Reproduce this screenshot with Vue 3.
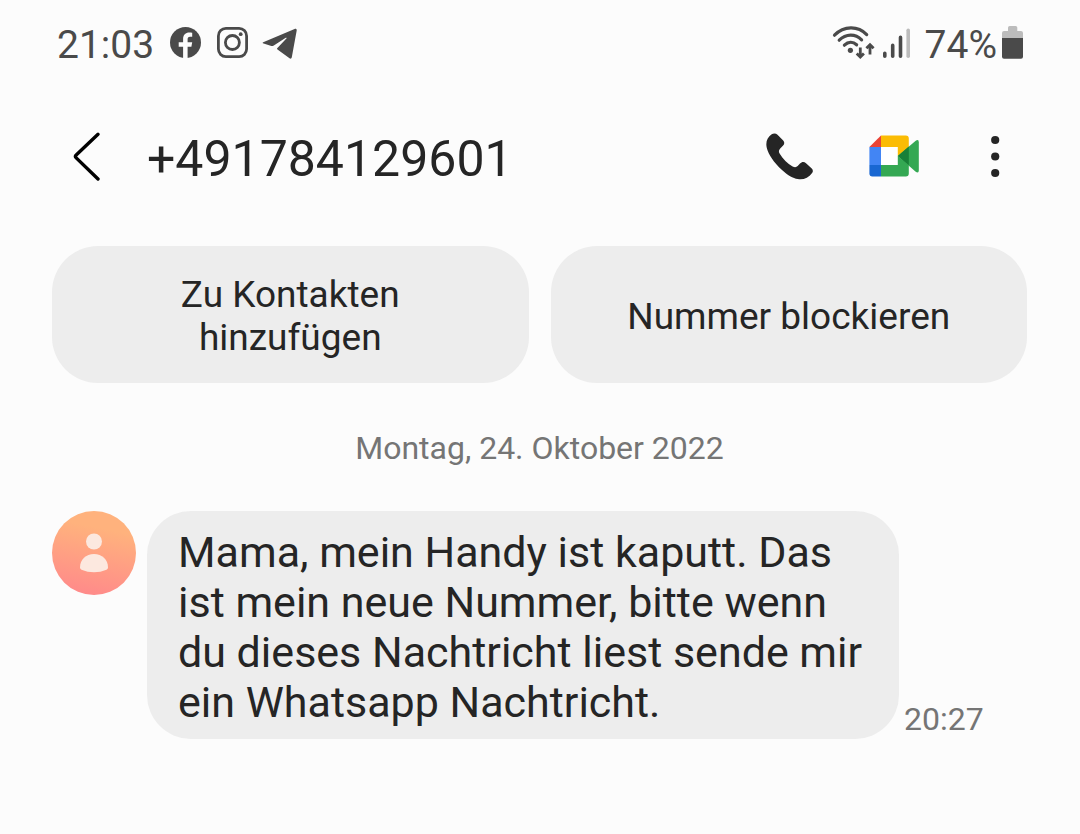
<template>
  <div class="screen">
    <div class="status-bar">
      <span class="clock">{{ clock }}</span>
      <div class="notifications">
        <svg width="31" height="36" viewBox="170 26 31 36" aria-label="Facebook">
          <circle cx="185.5" cy="42.5" r="15.5" fill="#4a4a4a" />
          <path d="M183.1 58.5V46.8h-4.4v-4.5h4.4v-3.4c0-4.2 2.5-6.4 6.2-6.4 1.3 0 2.4.1 2.9.2v4.1h-2.2c-1.8 0-2.4 1-2.4 2.4v3.1h4.6l-.8 4.5h-3.8v11.7z" fill="#fcfcfc" />
        </svg>
        <svg width="33" height="36" viewBox="215 26 33 36" fill="none" stroke="#4a4a4a" aria-label="Instagram">
          <rect x="218.4" y="28.4" width="28.2" height="28.2" rx="7.5" stroke-width="2.8" />
          <circle cx="232.4" cy="42.5" r="7" stroke-width="2.8" />
          <circle cx="240.7" cy="34.2" r="1.9" fill="#4a4a4a" stroke="none" />
        </svg>
        <svg width="35" height="36" viewBox="262 26 35 36" aria-label="Telegram">
          <path d="M263.2 42.3 294.6 28.9c1.3-.5 2.3.2 2.1 1.5l-4.9 26.9c-.3 1.4-1.2 1.7-2.3 1l-12-8.9c-.6-.5-.6-.9-.1-1.4l9-9.4c.7-.8-.1-1.1-1-.6l-11.6 7.4c-1 .6-2 .8-3.2.4l-7-2.2c-1.100-.3-1.2-1-.4-1.300z" fill="#4a4a4a" />
        </svg>
      </div>
      <div class="system">
        <svg width="43" height="36" viewBox="832 26 43 36" fill="none" stroke="#4a4a4a" stroke-linecap="round" aria-label="WLAN">
          <path d="M834.5 35.2c9.5-9.6 23.5-9.6 32.2-.6" stroke-width="3.2" />
          <path d="M839.2 40.2c6.8-6.7 16.1-6.7 22.4-.4" stroke-width="3.2" />
          <path d="M844.4 45.2c3.9-3.7 8.6-3.7 12.2-.4" stroke-width="3.2" />
          <circle cx="850.4" cy="50.3" r="2.6" fill="#4a4a4a" stroke="none" />
          <path d="M860.3 47.5v9M856.7 53.5l3.6 3.5 3.6-3.500M870 54.5v-9M866.4 48.200l3.6-3.500 3.6 3.500" stroke-width="2.8" stroke-linecap="butt" />
        </svg>
        <svg width="28" height="36" viewBox="882 26 28 36" stroke-width="3.600" stroke-linecap="round" aria-label="Mobilfunksignal">
          <path d="M884.8 53.3v3M892.7 45.4v10.9M900.5 37.4v18.9" stroke="#4a4a4a" />
          <path d="M908.2 30.2v26.1" stroke="#bcbcbc" />
        </svg>
        <span class="percent">{{ battery }}%</span>
        <svg width="21" height="36" viewBox="1002 26 21 36" aria-label="Akku">
          <path d="M1008 31v-3.300q0-1.700 1.700-1.700h5.900q1.700 0 1.700 1.700V31h3.700q2 0 2 2v5h-21v-5q0-2 2-2z" fill="#bcbcbc" />
          <path d="M1002 38h21v18.700q0 2-2 2h-17q-2 0-2-2z" fill="#4a4a4a" />
        </svg>
      </div>
    </div>

    <header class="header">
      <button class="icon-button back" type="button" aria-label="Zurück">
        <svg width="28" height="52" viewBox="73 132 28 52" fill="none" stroke="#000" stroke-width="3.4" stroke-linecap="round" stroke-linejoin="round">
          <path d="M98 134.300 76.2 154.900q-1.500 1.500 0 3L98 179" />
        </svg>
      </button>
      <h1 class="number">{{ number }}</h1>
      <button class="icon-button call" type="button" aria-label="Anrufen">
        <svg width="47" height="52" viewBox="766 132 47 52">
          <path d="M771.3 134.6c2.2-1.5 4.4-1.6 6.2.2l5.7 5.8c1.6 1.7 1.3 3.5-.3 5.1l-2.7 2.7c-1.6 1.7-1.6 3.3-.6 5.2 3.4 5.9 7.7 9.9 13 12.8 2.1 1.1 3.7 1 5.1-.4l2.3-2.4c1.8-1.9 4.1-2.1 6-.4l5.5 5c1.6 1.5 1.8 3.2.6 4.8-3.5 5-8.8 7-14.3 6.1-4.8-.7-10.4-4.1-15.8-9.1-8.2-7.8-13.6-15.3-15.3-22.6-1.2-5.1.6-10 4.6-12.8z" fill="#252525" />
        </svg>
      </button>
      <button class="icon-button meet" type="button" aria-label="Videoanruf mit Google Meet">
        <svg width="50" height="52" viewBox="869 132 50 52">
          <path d="M881 147h17v18h-17z" fill="#fff" />
          <path d="M869.4 147 881 135.6V147z" fill="#ea4335" />
          <path d="M869.4 147H881v18h-11.6z" fill="#4285f4" />
          <path d="M869.4 165H881v11.6h-8.6q-3 0-3-3z" fill="#1967d2" />
          <path d="M881 135.6h24.8q3 0 3 3V148l-11 8v-9H881z" fill="#fbbc04" />
          <path d="M881 165h16.8v-9l11 9v8.6q0 3-3 3H881z" fill="#34a853" />
          <path d="m897.8 156 17.6-15.1q3.4-2.4 3.4 1.3v28.2q0 3.4-3.4 1.1z" fill="#34a853" />
          <path d="m897.8 156 11-9.4v18.7z" fill="#188038" />
        </svg>
      </button>
      <button class="icon-button more" type="button" aria-label="Weitere Optionen">
        <svg width="10" height="52" viewBox="990 132 10 52" fill="#252525">
          <circle cx="995.2" cy="140" r="4.1" />
          <circle cx="995.2" cy="156.5" r="4.1" />
          <circle cx="995.2" cy="173" r="4.1" />
        </svg>
      </button>
    </header>

    <main>
      <div class="actions">
        <button v-for="action in actions" :key="action" class="action" type="button">{{ action }}</button>
      </div>

      <p class="date">Montag, 24. Oktober 2022</p>

      <div v-for="message in messages" :key="message.time" class="message">
        <svg class="avatar" width="84" height="84" viewBox="0 0 84 84" aria-hidden="true">
          <defs>
            <linearGradient id="avatar-fill" x1="0.6" y1="0" x2="0.4" y2="1">
              <stop offset="0.2" stop-color="#ffb27d" />
              <stop offset="1" stop-color="#ff8a8a" />
            </linearGradient>
          </defs>
          <circle cx="42" cy="42" r="42" fill="url(#avatar-fill)" />
          <circle cx="42" cy="30.5" r="8" fill="#fce8df" />
          <path d="M28 56.5C28 48.5 34 43 42 43s14 5.5 14 13.5q0 1.5-1.5 2.2Q48.5 61.3 42 61.3t-12.5-2.6Q28 58 28 56.5z" fill="#fce8df" />
        </svg>
        <p class="bubble">{{ message.text }}</p>
        <time class="time">{{ message.time }}</time>
      </div>
    </main>
  </div>
</template>

<script setup>
import { ref } from 'vue';

const clock = ref('21:03');
const battery = ref(74);
const number = ref('+491784129601');

const actions = ['Zu Kontakten hinzufügen', 'Nummer blockieren'];

const messages = ref([
  {
    text: 'Mama, mein Handy ist kaputt. Das ist mein neue Nummer, bitte wenn du dieses Nachtricht liest sende mir ein Whatsapp Nachtricht.',
    time: '20:27'
  }
]);
</script>

<style>
body {
  margin: 0;
  background: #fcfcfc;
}
</style>

<style scoped>
.screen {
  box-sizing: border-box;
  min-height: 100vh;
  padding: 0 53px 0 52px;
  background: #fcfcfc;
  color: #252525;
  font-family: Roboto, sans-serif;
}

svg {
  display: block;
  flex: none;
}

.status-bar {
  display: flex;
  align-items: center;
  height: 88px;
  padding: 0 4px 0 5px;
  color: #4a4a4a;
  font-size: 39px;
}

.clock,
.percent,
.number {
  padding-top: 2px;
}

.notifications {
  display: flex;
  gap: 14px;
  margin-left: 16px;
}

.system {
  display: flex;
  align-items: center;
  gap: 7px;
  margin-left: auto;
}

.percent {
  margin: 0 -2px 0 8px;
}

.header {
  display: flex;
  align-items: center;
  height: 140px;
  padding: 0 27px 0 21px;
}

.icon-button {
  padding: 0;
  border: none;
  background: none;
  cursor: pointer;
}

.number {
  flex: 1;
  margin: 0 0 0 46px;
  font-size: 50px;
  font-weight: 400;
}

.meet {
  margin-left: 56px;
}

.more {
  margin-left: 71px;
}

.actions {
  display: grid;
  grid-template-columns: 1fr 1fr;
  gap: 22px;
  margin-top: 18px;
}

.action {
  padding: 27px 48px 24px;
  border: none;
  border-radius: 46px;
  background: #ededed;
  color: inherit;
  font-family: inherit;
  font-size: 37px;
  line-height: 43px;
  cursor: pointer;
}

.date {
  margin: 45px 0 43px;
  color: #757575;
  font-size: 32px;
  line-height: 40px;
  text-align: center;
}

.message {
  display: flex;
  align-items: flex-start;
}

.bubble {
  box-sizing: border-box;
  max-width: 752px;
  margin: 0 0 0 11px;
  padding: 16px 31px 12px;
  border-radius: 44px;
  background: #ededed;
  font-size: 43px;
  line-height: 50px;
}

.time {
  align-self: flex-end;
  margin-left: 5px;
  color: #757575;
  font-size: 32px;
  line-height: 40px;
}
</style>
